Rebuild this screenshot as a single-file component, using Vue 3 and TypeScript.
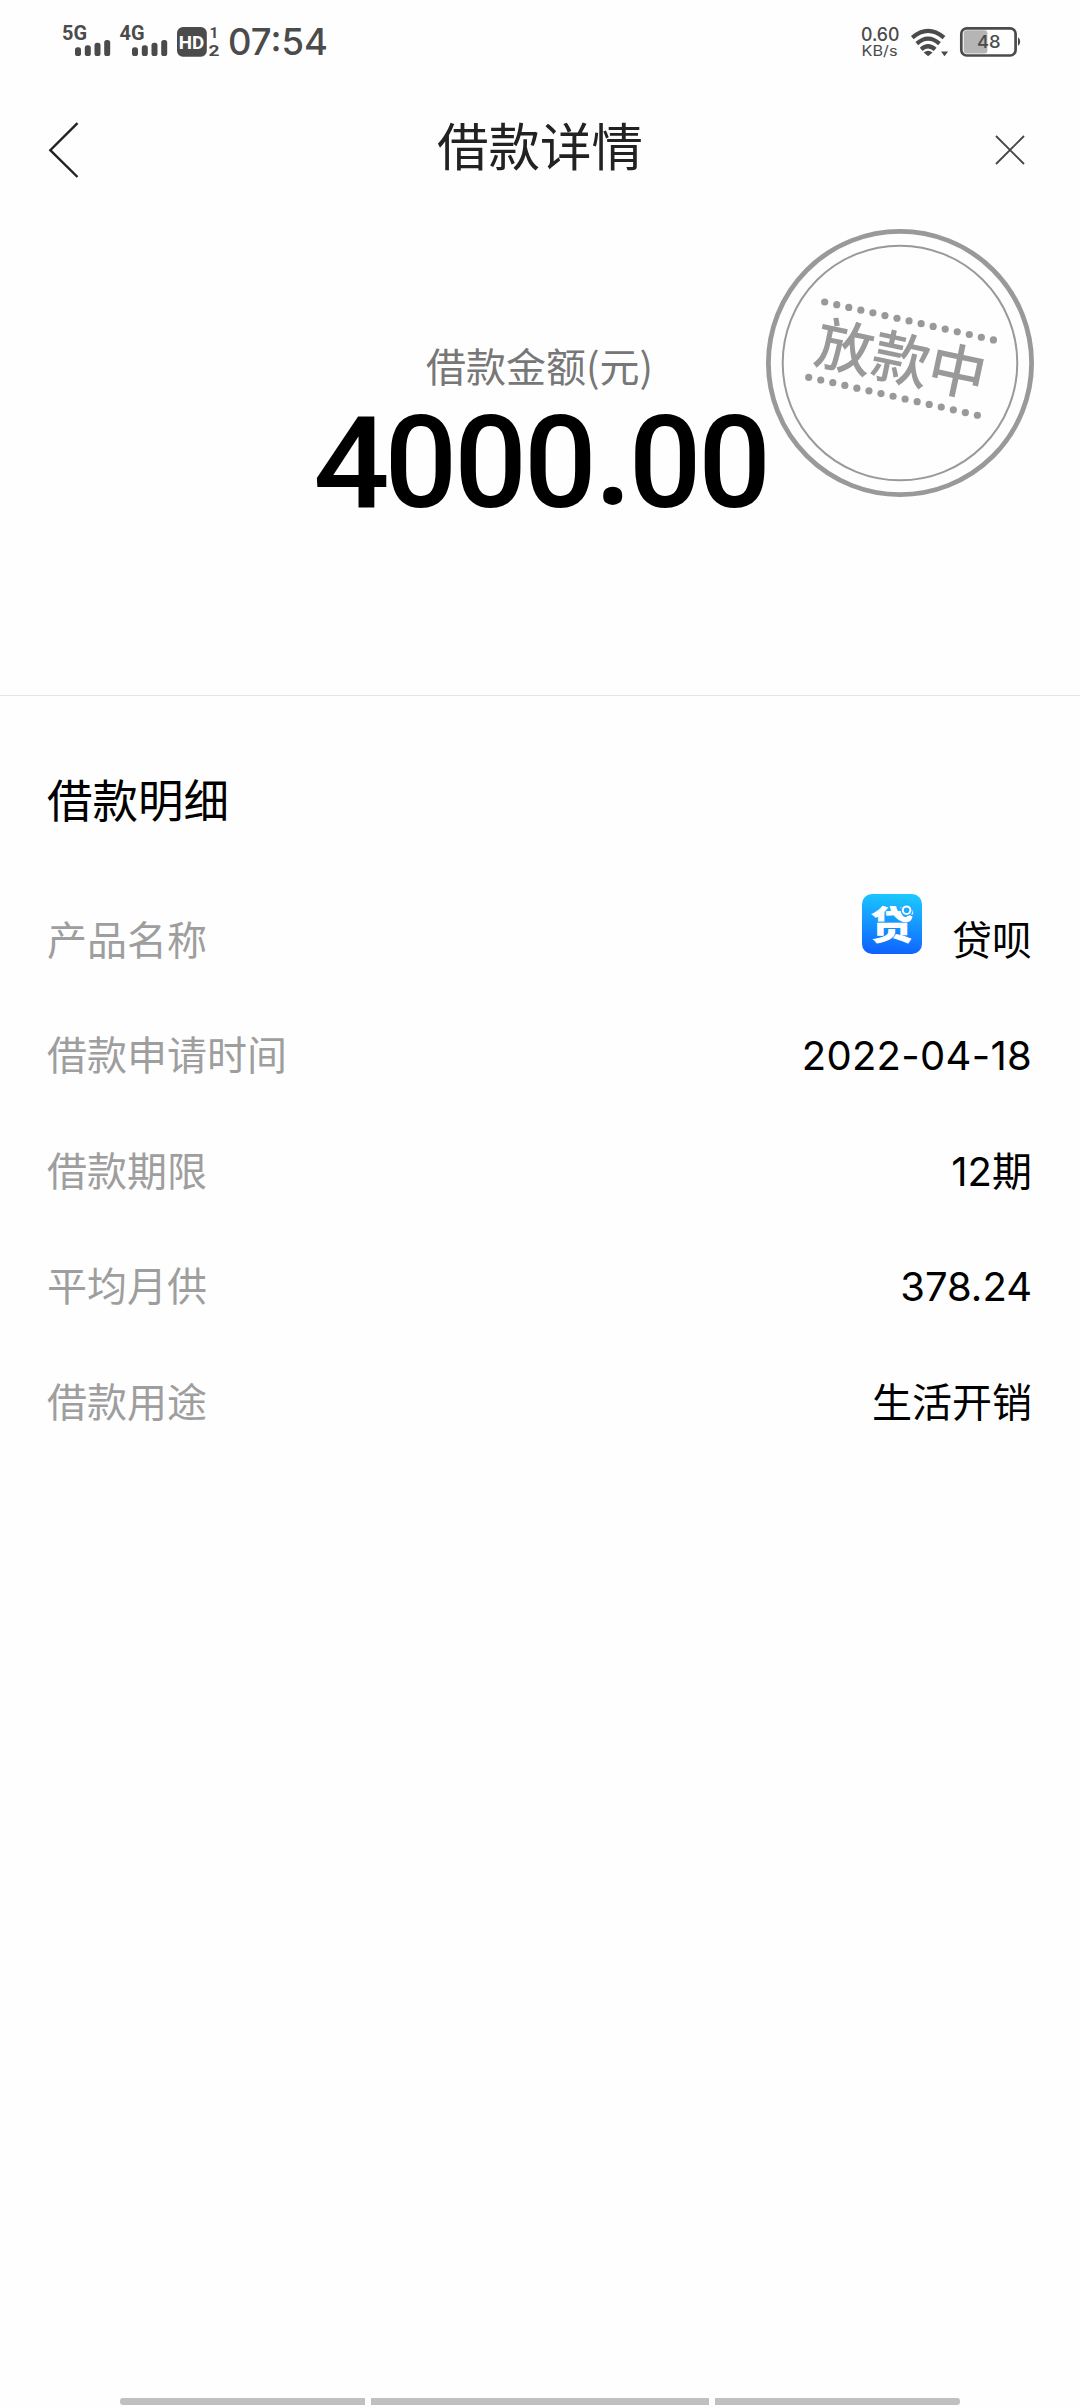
<script setup lang="ts">
interface Row {
  label: string
  value: string
  logo?: boolean
  kind?: string
}

const rows: Row[] = [
  { label: '产品名称', value: '贷呗', logo: true },
  { label: '借款申请时间', value: '2022-04-18', kind: 'date' },
  { label: '借款期限', value: '12期', kind: 'term' },
  { label: '平均月供', value: '378.24', kind: 'money' },
  { label: '借款用途', value: '生活开销' },
]

const amount: string[] = '4000.00'.split('')

const bars = [
  { x: 0, h: 8.7 },
  { x: 9.8, h: 10.7 },
  { x: 19.5, h: 13.3 },
  { x: 29.2, h: 16 },
]

const dots: number[] = Array.from({ length: 15 }, (_, i) => i)
</script>

<template>
  <div class="page">
    <header class="status">
      <svg width="221" height="84" viewBox="0 0 221 84">
        <g fill="#4b4b4b" font-family="Roboto, sans-serif" font-weight="700">
          <text x="62" y="39.6" font-size="20" textLength="25" lengthAdjust="spacingAndGlyphs">5G</text>
          <rect v-for="b in bars" :key="b.x" :x="75 + b.x" :y="56 - b.h" width="6" :height="b.h" rx="2.6" />
          <text x="119.5" y="39.6" font-size="20" textLength="25" lengthAdjust="spacingAndGlyphs">4G</text>
          <rect v-for="b in bars" :key="'b' + b.x" :x="132 + b.x" :y="56 - b.h" width="6" :height="b.h" rx="2.6" />
          <rect x="177" y="27" width="29.8" height="29.7" rx="6" />
          <text x="178.8" y="48.7" font-size="18" fill="#fff" textLength="25.5" lengthAdjust="spacingAndGlyphs">HD</text>
          <text x="209.5" y="38.3" font-size="15.5">1</text>
          <text x="208.6" y="55.9" font-size="15.5" textLength="11" lengthAdjust="spacingAndGlyphs">2</text>
        </g>
      </svg>
      <svg width="110" height="84" viewBox="0 0 110 84">
        <text x="7" y="55.3" font-size="36.5" fill="#4b4b4b" font-family="Inter, sans-serif" font-weight="450" textLength="100" lengthAdjust="spacingAndGlyphs">07:54</text>
      </svg>
      <svg class="status-right" width="180" height="84" viewBox="850 0 180 84">
        <g fill="#4b4b4b" font-family="Inter, sans-serif">
          <text x="861" y="41" font-size="18.4" font-weight="450" textLength="38.5" lengthAdjust="spacingAndGlyphs">0.60</text>
          <text x="861.5" y="56" font-size="14.2" font-weight="400" textLength="36" lengthAdjust="spacingAndGlyphs">KB/s</text>
          <g fill="none" stroke="#4b4b4b" stroke-width="4.2">
            <path d="M912.3 37.6Q928 24.2 944 37.6" />
            <path d="M916.8 43.6Q928 33.6 939.5 43.6" />
            <path d="M921.2 49.4Q928 43.2 935.2 49.4" />
          </g>
          <path d="M923.7 52.4Q928 49 932.6 52.4L928.1 56.3Z" />
          <path d="M941 51.4H948.2L944.5 56.2Z" />
          <rect x="963.7" y="30.3" width="23.7" height="23.2" rx="3" fill="#b5b5b5" />
          <rect x="961.3" y="28.3" width="54.3" height="27.2" rx="5.5" fill="none" stroke="#4b4b4b" stroke-width="2.7" />
          <path d="M1018 37.3Q1020.2 38.5 1020.2 41.6T1018 46Z" />
          <text x="977" y="48.4" font-size="17.4" font-weight="450" textLength="23.6" lengthAdjust="spacingAndGlyphs">48</text>
        </g>
      </svg>
    </header>

    <nav class="nav">
      <svg class="back" width="40" height="64" viewBox="0 0 40 64">
        <path d="M33.5 5.2L6.3 32.2L33.5 59" fill="none" stroke="#222" stroke-width="2.4" />
      </svg>
      <h1>借款详情</h1>
      <svg class="close" width="36" height="36" viewBox="0 0 36 36">
        <path d="M4 4L32 32M32 4L4 32" fill="none" stroke="#444" stroke-width="1.8" />
      </svg>
    </nav>

    <section class="hero">
      <div class="caption">借款金额(元)</div>
      <div class="amount">
        <span v-for="(c, i) in amount" :key="i" :class="[c === '.' ? 'point' : 'digit', { four: c === '4' }]"><b>{{ c }}</b></span>
      </div>
      <svg class="stamp" width="270" height="270" viewBox="-135 -135 270 270">
        <g fill="none" stroke="#999">
          <circle r="131.6" stroke-width="4.8" />
          <circle r="117.3" stroke-width="2" />
        </g>
        <g fill="#999">
          <circle v-for="i in dots" :key="i" :cx="-75.3 + i * 12.05" :cy="-61 + i * 2.71" r="3.6" />
          <circle v-for="i in dots" :key="'l' + i" :cx="-91.3 + i * 12.05" :cy="14.3 + i * 2.71" r="3.6" />
          <text transform="translate(1 -3.5) rotate(12)" y="21" text-anchor="middle" font-size="57.5" font-weight="500" font-family="'Noto Sans CJK SC', sans-serif">放款中</text>
        </g>
      </svg>
    </section>

    <section class="details">
      <h2>借款明细</h2>
      <div v-for="r in rows" :key="r.label" class="row">
        <span class="label">{{ r.label }}</span>
        <span class="value" :class="r.kind">
          <svg v-if="r.logo" class="logo" width="60" height="60" viewBox="0 0 60 60">
            <defs>
              <linearGradient id="logo-bg" x1="0.55" y1="0" x2="0.45" y2="1">
                <stop offset="0" stop-color="#1cc8ff" />
                <stop offset="0.5" stop-color="#1595ff" />
                <stop offset="1" stop-color="#0f62ff" />
              </linearGradient>
            </defs>
            <rect width="60" height="60" rx="10" fill="url(#logo-bg)" />
            <text transform="translate(30 45.2) scale(1.1 0.98)" text-anchor="middle" font-size="40" font-weight="900" fill="#fff" font-family="'Noto Sans CJK SC', sans-serif">贷</text>
            <circle cx="44.6" cy="16.2" r="6" fill="#1aabff" />
            <circle cx="44.6" cy="16.2" r="3.8" fill="none" stroke="#fff" stroke-width="2" />
          </svg>
          <span>{{ r.value }}</span>
        </span>
      </div>
    </section>

    <footer class="gesture">
      <i class="side left"></i>
      <i class="mid"></i>
      <i class="side right"></i>
    </footer>
  </div>
</template>

<style>
body {
  background: #fefefe;
}
</style>

<style scoped>
.page {
  width: 1080px;
  height: 2408px;
  display: flex;
  flex-direction: column;
  background: #fefefe;
  font-family: 'Noto Sans CJK SC', sans-serif;
  color: #000;
  overflow: hidden;
}
svg {
  display: block;
  flex: none;
}
.status {
  height: 84px;
  display: flex;
}
.status-right {
  margin-left: auto;
  margin-right: 50px;
}
.nav {
  height: 132px;
  display: flex;
  align-items: center;
  justify-content: space-between;
  padding: 0 51px 0 44px;
}
.back {
  margin-right: 3px;
}
.close {
  margin: 0 1px 0 -1px;
}
h1,
h2 {
  margin: 0;
  font-weight: 400;
}
h1 {
  font-size: 51.5px;
  line-height: 60px;
  color: #222;
  margin-top: -13px;
}
.hero {
  position: relative;
  height: 480px;
  box-sizing: border-box;
  padding-top: 121px;
  border-bottom: 1px solid #e4e4e4;
  display: flex;
  flex-direction: column;
  align-items: center;
}
.caption {
  font-size: 40px;
  line-height: 56px;
  color: #777;
  margin-left: -1px;
}
.amount {
  display: flex;
  height: 140px;
  line-height: 140px;
  margin-left: 6px;
  font-family: Roboto, sans-serif;
  font-size: 128px;
}
.amount b {
  display: block;
  font-weight: 500;
}
.digit {
  width: 69.7px;
  display: flex;
  justify-content: center;
}
.four b {
  transform: scaleX(1.05);
}
.point {
  width: 35px;
  height: 138px;
  line-height: 136px;
  display: flex;
  justify-content: center;
  font-family: 'Noto Sans', sans-serif;
  font-size: 110px;
}
.point b {
  font-weight: 700;
}
.stamp {
  position: absolute;
  left: 765px;
  top: 12px;
}
.details {
  padding: 64px 48px 0 47px;
}
h2 {
  font-size: 45.5px;
  line-height: 76px;
  margin-bottom: 44px;
}
.row {
  height: 115.5px;
  display: flex;
  align-items: center;
  justify-content: space-between;
  font-size: 40px;
  line-height: 60px;
}
.label {
  color: #9e9e9e;
}
.value {
  display: flex;
  align-items: center;
}
.logo {
  margin: -27px 30px 0 0;
}
.date,
.term,
.money {
  font-family: Inter, 'Noto Sans CJK SC', sans-serif;
  padding-top: 6px;
}
.date {
  letter-spacing: 0.3px;
}
.gesture {
  margin-top: auto;
  height: 10px;
  display: flex;
  justify-content: center;
  gap: 6px;
}
.gesture i {
  height: 7px;
  background: #c0c0c0;
}
.side {
  width: 245px;
}
.mid {
  width: 338px;
}
.left {
  border-radius: 3px 0 0 3px;
}
.right {
  border-radius: 0 3px 3px 0;
}
</style>
